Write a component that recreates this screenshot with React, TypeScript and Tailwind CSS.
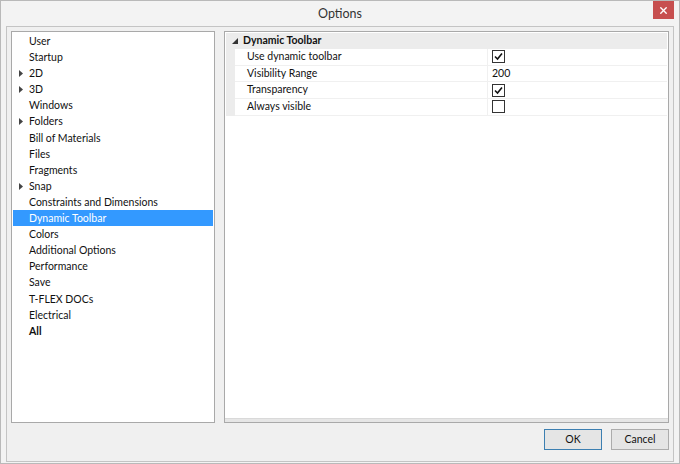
import { X } from 'lucide-react'

const treeItems: { label: string; arrow?: boolean; selected?: boolean; bold?: boolean }[] = [
  { label: 'User' },
  { label: 'Startup' },
  { label: '2D', arrow: true },
  { label: '3D', arrow: true },
  { label: 'Windows' },
  { label: 'Folders', arrow: true },
  { label: 'Bill of Materials' },
  { label: 'Files' },
  { label: 'Fragments' },
  { label: 'Snap', arrow: true },
  { label: 'Constraints and Dimensions' },
  { label: 'Dynamic Toolbar', selected: true },
  { label: 'Colors' },
  { label: 'Additional Options' },
  { label: 'Performance' },
  { label: 'Save' },
  { label: 'T-FLEX DOCs' },
  { label: 'Electrical' },
  { label: 'All', bold: true },
]

const props: { label: string; value: 'on' | 'off' | string }[] = [
  { label: 'Use dynamic toolbar', value: 'on' },
  { label: 'Visibility Range', value: '200' },
  { label: 'Transparency', value: 'on' },
  { label: 'Always visible', value: 'off' },
]

function CheckBox({ checked }: { checked: boolean }) {
  return (
    <div className="w-[13px] h-[13px] border border-[#333] bg-white flex items-center justify-center">
      {checked && (
        <svg width="9" height="9" viewBox="0 0 9 9">
          <path d="M1 4.5 L3.5 7 L8 1.5" stroke="#111" strokeWidth="1.6" fill="none" />
        </svg>
      )}
    </div>
  )
}

function Arrow() {
  return (
    <svg width="5" height="7" viewBox="0 0 5 7" className="absolute left-[6px] top-[5px]">
      <path d="M0 0 L4 3.5 L0 7 Z" fill="#444" />
    </svg>
  )
}

export default function App() {
  return (
    <div
      className="w-[680px] h-[464px] bg-[#f3f3f3] border border-[#b9b9b9] flex flex-col text-[10.5px] text-[#111]"
      style={{ fontFamily: 'Lato, "Noto Sans", sans-serif' }}
    >
      {/* title bar */}
      <div className="h-[25px] relative flex items-center justify-center shrink-0">
        <span className="text-[12.5px] text-[#333] mt-[1px]">Options</span>
        <div className="absolute right-[5px] top-0 w-[21px] h-[18px] bg-[#c74f4f] flex items-center justify-center">
          <X size={11} color="white" strokeWidth={3} />
        </div>
      </div>

      {/* client */}
      <div className="flex-1 mx-[5px] mb-[1px] border border-[#c4c4c4] bg-[#f0f0f0] flex flex-col">
        <div className="flex gap-[9px] px-[4px] pt-[4px]">
          {/* tree */}
          <div className="w-[204px] h-[392px] bg-white border border-[#a9a9a9] pt-[1px]">
            {treeItems.map((it) => (
              <div
                key={it.label}
                className={`relative h-[16.1px] leading-[16px] pl-[16px] mx-[1px] ${
                  it.selected ? 'bg-[#3399ff] text-white' : ''
                } ${it.bold ? 'font-bold' : ''}`}
              >
                {it.arrow && <Arrow />}
                {it.label}
              </div>
            ))}
          </div>

          {/* property grid */}
          <div className="flex-1 h-[392px] bg-white border border-[#a9a9a9] flex flex-col">
            <div className="flex-1 pt-[1px] px-[1px]">
              <div className="h-[16px] bg-[#ececec] flex items-center relative">
                <svg width="6" height="6" viewBox="0 0 6 6" className="absolute left-[6px] top-[5px]">
                  <path d="M6 0 L6 6 L0 6 Z" fill="#333" />
                </svg>
                <span className="pl-[17px] font-bold">Dynamic Toolbar</span>
              </div>
              {props.map((p) => (
                <div key={p.label} className="h-[16.7px] flex">
                  <div className="w-[9px] bg-[#ececec] shrink-0" />
                  <div className="w-[253px] border-b border-[#f0f0f0] border-r border-r-[#f0f0f0] pl-[12px] leading-[15px] shrink-0">
                    {p.label}
                  </div>
                  <div className="flex-1 border-b border-[#f0f0f0] pl-[4px] flex items-center">
                    {p.value === 'on' || p.value === 'off' ? (
                      <CheckBox checked={p.value === 'on'} />
                    ) : (
                      <span className="leading-[15px]">{p.value}</span>
                    )}
                  </div>
                </div>
              ))}
            </div>
            <div className="h-[4px] bg-[#e6e6e6] border-t border-[#d9d9d9]" />
          </div>
        </div>

        {/* buttons */}
        <div className="flex justify-end gap-[9px] px-[4px] pt-[6px]">
          <button className="w-[58px] h-[21px] border border-[#3c7fb1] bg-[#e5e5e5] text-[10.5px]">OK</button>
          <button className="w-[58px] h-[21px] border border-[#acacac] bg-[#e5e5e5] text-[10.5px]">Cancel</button>
        </div>
      </div>
    </div>
  )
}
